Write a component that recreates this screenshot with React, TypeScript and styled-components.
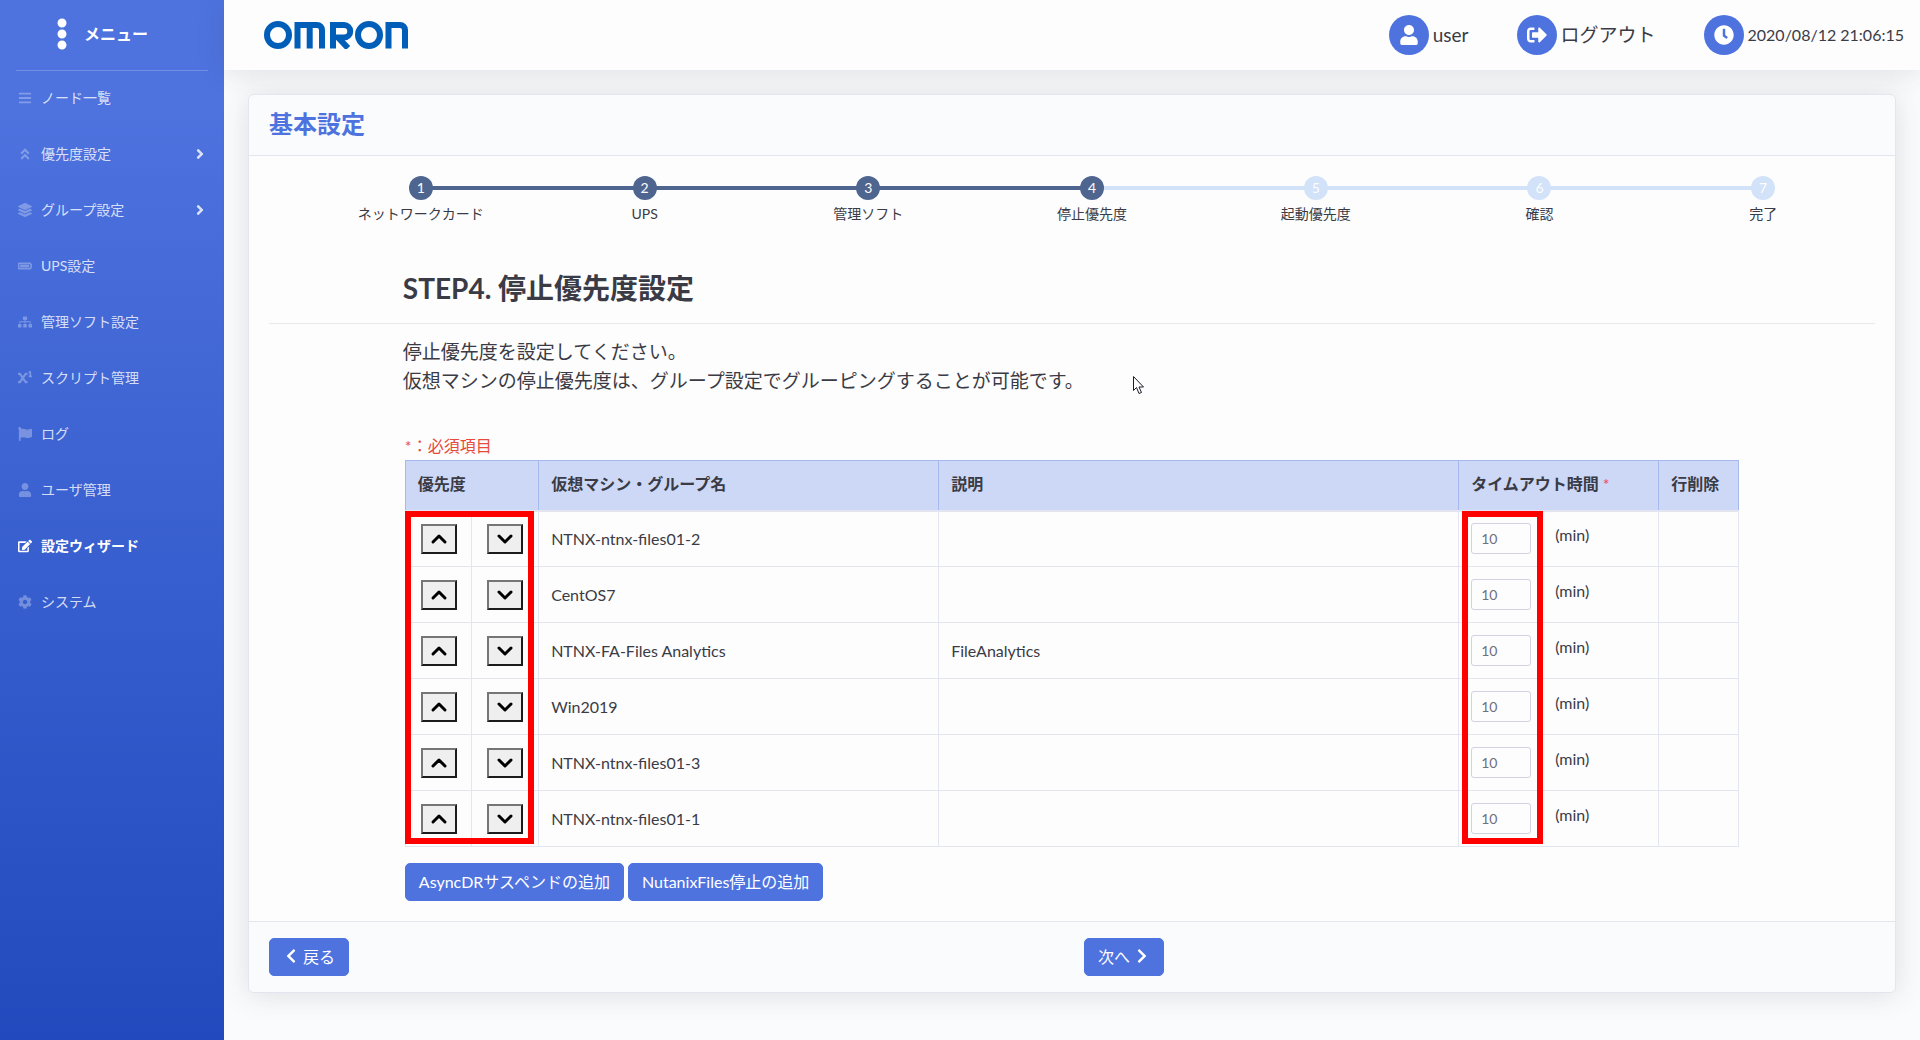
import React from "react";
import styled, { createGlobalStyle } from "styled-components";
import { ChevronDown, ChevronUp } from "lucide-react";
import {
  FaAngleDoubleUp, FaAngleRight, FaBars, FaBatteryFull, FaChevronLeft,
  FaChevronRight, FaClock, FaCog, FaEdit, FaEllipsisV, FaFlag, FaLayerGroup, FaSignOutAlt,
  FaSitemap, FaSuperscript, FaUser,
} from "react-icons/fa";

const PRIMARY = "#4e73df";
const LINE = "#e3e6f0";
const TEXT = "#3a3b45";

const GlobalStyle = createGlobalStyle`
  *, *::before, *::after { box-sizing: border-box; }
  body {
    margin: 0;
    background: #fafbfd;
    color: ${TEXT};
    font: 400 16px/24px Lato, "Noto Sans CJK JP", sans-serif;
  }
  button, input { font-family: inherit; }
  h1, h2, p, ol, ul { margin: 0; padding: 0; }
  ol, ul { list-style: none; }
  a { color: inherit; text-decoration: none; }
`;

const Page = styled.div`
  display: flex;
  min-height: 100vh;
`;

const Sidebar = styled.nav`
  flex: 0 0 224px;
  background: linear-gradient(180deg, #4e73df 10%, #224abe 100%);
  color: #fff;
`;

const Brand = styled.a`
  display: flex;
  align-items: center;
  justify-content: center;
  gap: 6px;
  height: 70px;
  padding: 0 30px 2px 0;
  font-weight: 700;
  svg { width: 32px; height: 32px; }
`;

const Divider = styled.hr`
  height: 1px;
  margin: 0 16px;
  border: 0;
  background: rgba(255, 255, 255, 0.2);
`;

const MenuLink = styled.a<{ $active?: boolean }>`
  display: flex;
  align-items: center;
  gap: 7px;
  height: 56px;
  padding: 0 16px 2px;
  font-size: 14px;
  font-weight: ${(p) => (p.$active ? 700 : 400)};
  color: ${(p) => (p.$active ? "#fff" : "rgba(255, 255, 255, 0.8)")};
`;

const MenuIcon = styled.span<{ $active?: boolean }>`
  display: flex;
  justify-content: center;
  width: 18px;
  color: ${(p) => (p.$active ? "#fff" : "rgba(255, 255, 255, 0.3)")};
  svg { width: auto; height: 14px; }
`;

const MenuArrow = styled(FaAngleRight)`
  margin-left: auto;
  font-size: 16px;
`;

const Content = styled.div`
  flex: 1;
  min-width: 0;
`;

const Topbar = styled.header`
  display: flex;
  align-items: center;
  justify-content: space-between;
  height: 70px;
  padding: 0 16px 0 40px;
  background: #fdfdfd;
  box-shadow: 0 2px 28px rgba(58, 59, 69, 0.15);
`;

const TopItems = styled.div`
  display: flex;
  gap: 48px;
`;

const TopItem = styled.a<{ $size: number }>`
  display: flex;
  align-items: center;
  gap: 4px;
  font-size: ${(p) => p.$size}px;
`;

const RoundIcon = styled.span`
  display: grid;
  place-items: center;
  width: 40px;
  height: 40px;
  border-radius: 50%;
  background: ${PRIMARY};
  color: #fff;
  font-size: 20px;
`;

const Main = styled.main`
  padding: 24px;
`;

const Card = styled.section`
  border: 1px solid ${LINE};
  border-radius: 6px;
  background: #fdfdfd;
  box-shadow: 0 2px 28px rgba(58, 59, 69, 0.15);
`;

const CardHeader = styled.div`
  padding: 11px 20px 13px;
  border-bottom: 1px solid ${LINE};
  border-radius: 6px 6px 0 0;
  background: #fafbfd;
`;

const CardTitle = styled.h1`
  font-size: 24px;
  line-height: 36px;
  color: ${PRIMARY};
`;

const CardBody = styled.div`
  padding: 20px;
`;

const CardFooter = styled.div`
  display: grid;
  grid-template-columns: 1fr 1fr;
  gap: 24px;
  justify-items: start;
  padding: 16px 20px;
  border-top: 1px solid ${LINE};
  border-radius: 0 0 6px 6px;
  background: #fafbfd;
`;

const Steps = styled.ol`
  display: flex;
  padding-left: 40px;
`;

const Step = styled.li<{ $done: boolean; $first: boolean }>`
  flex: 1;
  position: relative;
  display: flex;
  flex-direction: column;
  align-items: center;
  gap: 2px;
  font-size: 14px;
  &::before {
    content: "";
    display: ${(p) => (p.$first ? "none" : "block")};
    position: absolute;
    top: 10px;
    right: 50%;
    width: 100%;
    height: 4px;
    background: ${(p) => (p.$done ? "#4e658f" : "#d1e2f9")};
  }
`;

const StepDot = styled.span<{ $done: boolean }>`
  z-index: 1;
  width: 24px;
  height: 24px;
  border-radius: 50%;
  text-align: center;
  color: #fdfdfd;
  background: ${(p) => (p.$done ? "#4e658f" : "#d1e2f9")};
`;

const Inset = styled.div`
  width: calc(100% * 10 / 12);
  margin: 0 auto;
`;

const StepTitle = styled.h2`
  margin: 45px 0 18px;
  font-size: 28px;
  line-height: 34px;
`;

const Rule = styled.hr`
  height: 1px;
  margin: 0;
  border: 0;
  background: #e8e9ec;
`;

const Lead = styled.p`
  margin: 13px 0 39px;
  font-size: 19px;
  line-height: 29px;
`;

const TableArea = styled.div`
  padding: 0 2px;
`;

const Required = styled.p`
  color: #e74a3b;
`;

const Star = styled.span`
  color: #e74a3b;
  font-weight: 400;
`;

const TableWrap = styled.div`
  position: relative;
  margin: 2px 0 16px;
`;

const Highlight = styled.div<{ $left: string; $width: number }>`
  position: absolute;
  top: 51px;
  bottom: 3px;
  left: ${(p) => p.$left};
  width: ${(p) => p.$width}px;
  border: 6px solid #f00;
  pointer-events: none;
`;

const Table = styled.table`
  width: 100%;
  table-layout: fixed;
  border-collapse: collapse;
`;

const Th = styled.th`
  height: 50px;
  padding: 0 12px 2px;
  border: 1px solid #a6b9ef;
  border-bottom: 2px solid ${LINE};
  background: #cdd8f6;
  text-align: left;
`;

const Td = styled.td<{ $center?: boolean }>`
  height: 56px;
  padding: 0 ${(p) => (p.$center ? 0 : 12)}px;
  border: 1px solid ${LINE};
  text-align: ${(p) => (p.$center ? "center" : "left")};
`;

const MoveButton = styled.button`
  display: inline-grid;
  place-items: center;
  width: 36px;
  height: 30px;
  padding: 0;
  border: 2px solid;
  border-color: #767676 #1c1c1c #1c1c1c #767676;
  background: #efefef;
  color: #000;
  vertical-align: middle;
`;

const Timeout = styled.label`
  display: flex;
  align-items: flex-start;
  gap: 24px;
`;

const TimeoutInput = styled.input`
  width: 60px;
  height: 31px;
  padding: 4px 9px;
  border: 1px solid #d1d3e2;
  border-radius: 3px;
  background: #fdfdfd;
  color: #6e707e;
  font-size: 14px;
`;

const Actions = styled.div`
  display: flex;
  gap: 4px;
`;

const Button = styled.button`
  display: inline-flex;
  align-items: center;
  gap: 4px;
  height: 38px;
  padding: 0 13px 2px;
  border: 1px solid ${PRIMARY};
  border-radius: 5px;
  background: ${PRIMARY};
  color: #fff;
  font-size: 16px;
`;

const Cursor = styled.svg`
  position: absolute;
  top: 375px;
  left: 1132px;
  width: 14px;
  height: 20px;
  pointer-events: none;
`;

const MENU = [
  { label: "ノード一覧", icon: FaBars },
  { label: "優先度設定", icon: FaAngleDoubleUp, sub: true },
  { label: "グループ設定", icon: FaLayerGroup, sub: true },
  { label: "UPS設定", icon: FaBatteryFull },
  { label: "管理ソフト設定", icon: FaSitemap },
  { label: "スクリプト管理", icon: FaSuperscript },
  { label: "ログ", icon: FaFlag },
  { label: "ユーザ管理", icon: FaUser },
  { label: "設定ウィザード", icon: FaEdit, active: true },
  { label: "システム", icon: FaCog },
];

const STEPS = ["ネットワークカード", "UPS", "管理ソフト", "停止優先度", "起動優先度", "確認", "完了"];
const CURRENT_STEP = 4;

const ROWS = [
  { name: "NTNX-ntnx-files01-2", note: "" },
  { name: "CentOS7", note: "" },
  { name: "NTNX-FA-Files Analytics", note: "FileAnalytics" },
  { name: "Win2019", note: "" },
  { name: "NTNX-ntnx-files01-3", note: "" },
  { name: "NTNX-ntnx-files01-1", note: "" },
];

const COLUMNS = ["5%", "5%", "30%", "39%", "15%", "6%"];

const Logo = () => (
  <svg width="144" height="28" viewBox="0 0 144 28" fill="none" stroke="#005eb8" role="img" aria-label="OMRON">
    <circle cx="14" cy="14" r="11" strokeWidth="6" />
    <path d="M33.5 27.5V4H53a5 5 0 0 1 5 5v18.5M45.7 4v23.5" strokeWidth="6" />
    <path d="M69 27.5V4h11a5 5 0 0 1 0 12.5h-6L84 27" strokeWidth="6" />
    <circle cx="105" cy="14" r="11" strokeWidth="6" />
    <path d="M124.5 27.5V4H136a5 5 0 0 1 5 5v18.5" strokeWidth="6" />
  </svg>
);

export default function App() {
  return (
    <Page>
      <GlobalStyle />
      <Sidebar>
        <Brand href="#"><FaEllipsisV />メニュー</Brand>
        <Divider />
        <ul>
          {MENU.map(({ label, icon: Icon, sub, active }) => (
            <li key={label}>
              <MenuLink href="#" $active={active}>
                <MenuIcon $active={active}><Icon /></MenuIcon>
                {label}
                {sub && <MenuArrow />}
              </MenuLink>
            </li>
          ))}
        </ul>
      </Sidebar>
      <Content>
        <Topbar>
          <Logo />
          <TopItems>
            <TopItem href="#" $size={19}><RoundIcon><FaUser /></RoundIcon>user</TopItem>
            <TopItem href="#" $size={19}><RoundIcon><FaSignOutAlt /></RoundIcon>ログアウト</TopItem>
            <TopItem as="div" $size={16}><RoundIcon><FaClock /></RoundIcon>2020/08/12 21:06:15</TopItem>
          </TopItems>
        </Topbar>
        <Main>
          <Card>
            <CardHeader><CardTitle>基本設定</CardTitle></CardHeader>
            <CardBody>
              <Steps>
                {STEPS.map((label, i) => (
                  <Step key={label} $done={i < CURRENT_STEP} $first={i === 0}>
                    <StepDot $done={i < CURRENT_STEP}>{i + 1}</StepDot>
                    {label}
                  </Step>
                ))}
              </Steps>
              <Inset><StepTitle>STEP4. 停止優先度設定</StepTitle></Inset>
              <Rule />
              <Inset>
                <Lead>
                  停止優先度を設定してください。<br />
                  仮想マシンの停止優先度は、グループ設定でグルーピングすることが可能です。
                </Lead>
                <TableArea>
                  <Required>*：必須項目</Required>
                  <TableWrap>
                    <Table>
                      <colgroup>{COLUMNS.map((w, i) => <col key={i} width={w} />)}</colgroup>
                      <thead>
                        <tr>
                          <Th colSpan={2}>優先度</Th>
                          <Th>仮想マシン・グループ名</Th>
                          <Th>説明</Th>
                          <Th>タイムアウト時間 <Star>*</Star></Th>
                          <Th>行削除</Th>
                        </tr>
                      </thead>
                      <tbody>
                        {ROWS.map((row) => (
                          <tr key={row.name}>
                            <Td $center>
                              <MoveButton type="button" aria-label="上へ"><ChevronUp size={24} strokeWidth={3} /></MoveButton>
                            </Td>
                            <Td $center>
                              <MoveButton type="button" aria-label="下へ"><ChevronDown size={24} strokeWidth={3} /></MoveButton>
                            </Td>
                            <Td>{row.name}</Td>
                            <Td>{row.note}</Td>
                            <Td><Timeout><TimeoutInput defaultValue="10" />(min)</Timeout></Td>
                            <Td />
                          </tr>
                        ))}
                      </tbody>
                    </Table>
                    <Highlight $left="0" $width={129} />
                    <Highlight $left="calc(79% + 3px)" $width={81} />
                  </TableWrap>
                  <Actions>
                    <Button type="button">AsyncDRサスペンドの追加</Button>
                    <Button type="button">NutanixFiles停止の追加</Button>
                  </Actions>
                </TableArea>
              </Inset>
            </CardBody>
            <CardFooter>
              <Button type="button"><FaChevronLeft />戻る</Button>
              <Button type="button">次へ<FaChevronRight /></Button>
            </CardFooter>
          </Card>
        </Main>
      </Content>
      <Cursor viewBox="0 0 14 20" fill="#fff" stroke="#1c1c2c">
        <path d="M1.5 1.5v14l3-3 2.5 6 2.5-1-2.5-5.5h4.500z" />
      </Cursor>
    </Page>
  );
}
